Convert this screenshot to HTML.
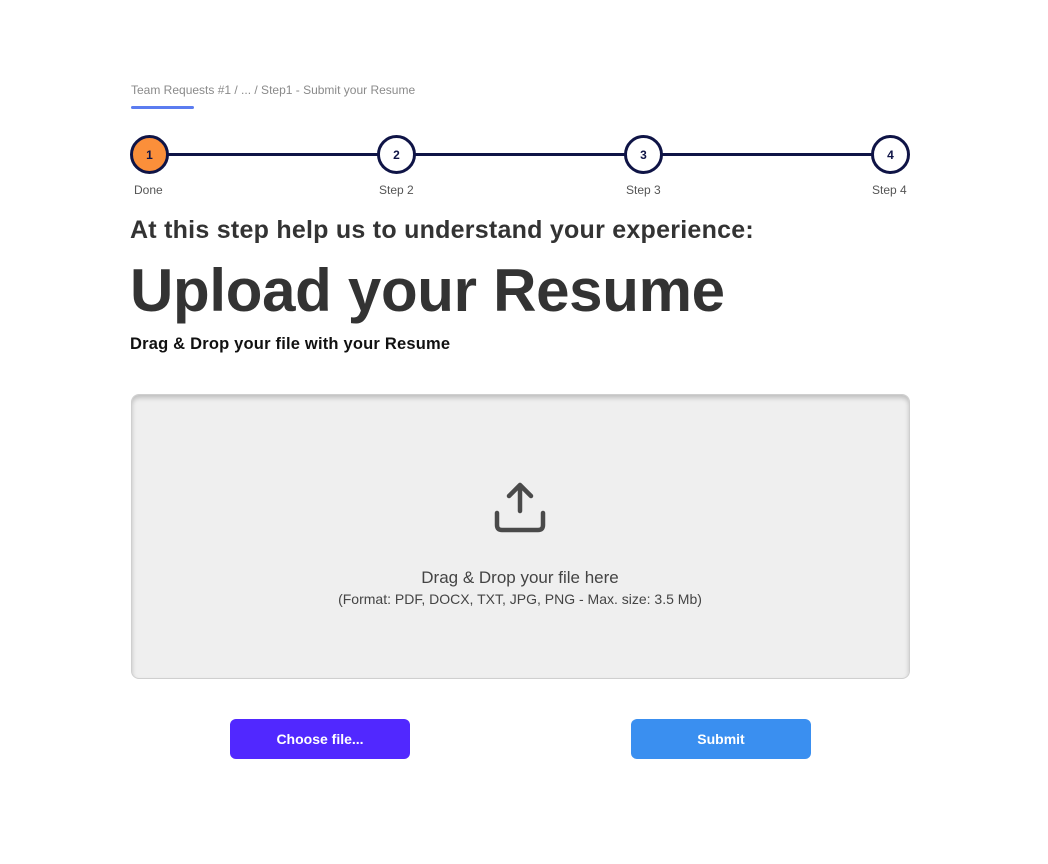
<!DOCTYPE html>
<html><head><style>
*{margin:0;padding:0;box-sizing:border-box}
body{width:1048px;height:864px;background:#fff;font-family:"Liberation Sans",sans-serif;position:relative;overflow:hidden}
.a{position:absolute}
.crumb{left:131px;top:83px;font-size:12px;color:#8a8a8a}
.ul{left:131px;top:106px;width:63px;height:3px;border-radius:2px;background:#5b7cf0}
.line{left:150px;top:153px;width:740px;height:3px;background:#0f1446}
.c{width:39px;height:39px;border-radius:50%;border:3px solid #0f1446;background:#fff;font-size:12px;font-weight:bold;color:#0f1446;display:flex;align-items:center;justify-content:center;top:135px}
.lb{font-size:12px;color:#555;top:183px}
.h2{left:130px;top:216px;font-size:25px;font-weight:bold;color:#333;letter-spacing:0.25px}
.h1{left:130px;top:256px;font-size:60px;font-weight:bold;color:#333;letter-spacing:-0.3px}
.h3{left:130px;top:335px;font-size:16.5px;font-weight:bold;color:#111;letter-spacing:0.2px}
.drop{left:131px;top:394px;width:779px;height:285px;background:#efefef;border:1px solid #cfcfcf;border-radius:8px;box-shadow:inset 0 3px 5px rgba(0,0,0,.2)}
.t1{left:0;width:1040px;text-align:center;top:568px;font-size:17px;color:#444}
.t2{left:0;width:1040px;text-align:center;top:591px;font-size:14px;color:#444}
.btn{top:719px;width:180px;height:40px;border-radius:6px;color:#fff;font-size:14px;font-weight:bold;display:flex;align-items:center;justify-content:center}
</style></head><body>
<div class="a crumb">Team Requests #1 / ... / Step1 - Submit your Resume</div>
<div class="a ul"></div>
<div class="a line"></div>
<div class="a c" style="left:130px;background:#fb8f3a">1</div>
<div class="a c" style="left:377px">2</div>
<div class="a c" style="left:624px">3</div>
<div class="a c" style="left:871px">4</div>
<div class="a lb" style="left:134px">Done</div>
<div class="a lb" style="left:379px">Step 2</div>
<div class="a lb" style="left:626px">Step 3</div>
<div class="a lb" style="left:872px">Step 4</div>
<div class="a h2">At this step help us to understand your experience:</div>
<div class="a h1">Upload your Resume</div>
<div class="a h3">Drag &amp; Drop your file with your Resume</div>
<div class="a drop"></div>
<svg class="a" style="left:490px;top:478px" width="60" height="60" viewBox="0 0 60 60" fill="none" stroke="#4a4a4a" stroke-width="4.5" stroke-linecap="round" stroke-linejoin="round">
<path d="M30 7V33M19 18L30 7L41 18"/>
<path d="M7 35V47Q7 52 12 52H48Q53 52 53 47V35"/>
</svg>
<div class="a t1">Drag &amp; Drop your file here</div>
<div class="a t2">(Format: PDF, DOCX, TXT, JPG, PNG - Max. size: 3.5 Mb)</div>
<div class="a btn" style="left:230px;background:#5128ff">Choose file...</div>
<div class="a btn" style="left:631px;background:#3a8ff0">Submit</div>
</body></html>
